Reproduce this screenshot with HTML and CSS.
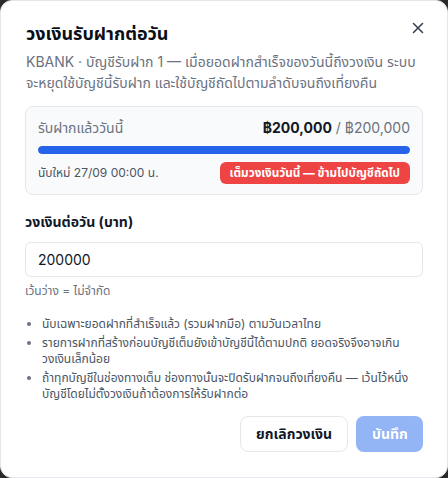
FILE: index.html
```html
<!DOCTYPE html>
<html lang="th">
<head>
<meta charset="utf-8">
<link rel="stylesheet" href="styles.css">
</head>
<body>
<div class="dialog">
  <div class="header">
    <h2 class="title">วงเงินรับฝากต่อวัน</h2>
    <button class="close" aria-label="close">
      <svg width="12" height="12" viewBox="0 0 12 12"><path d="M1.5 1.5L10.5 10.5M10.5 1.5L1.5 10.5" stroke="#374151" stroke-width="1.6" stroke-linecap="round"/></svg>
    </button>
  </div>
  <p class="desc">KBANK · บัญชีรับฝาก 1 — เมื่อยอดฝากสำเร็จของวันนี้ถึงวงเงิน ระบบจะหยุดใช้บัญชีนี้รับฝาก และใช้บัญชีถัดไปตามลำดับจนถึงเที่ยงคืน</p>
  <div class="card">
    <div class="row top">
      <span class="muted">รับฝากแล้ววันนี้</span>
      <span class="amount"><b>฿200,000</b> / ฿200,000</span>
    </div>
    <div class="bar"><div class="fill" style="width:100%"></div></div>
    <div class="row bottom">
      <span class="reset">นับใหม่ 27/09 00:00 น.</span>
      <span class="badge">เต็มวงเงินวันนี้ — ข้ามไปบัญชีถัดไป</span>
    </div>
  </div>
  <label class="label">วงเงินต่อวัน (บาท)</label>
  <div class="input">200000</div>
  <div class="hint">เว้นว่าง = ไม่จำกัด</div>
  <ul class="notes">
    <li><span class="t">นับเฉพาะยอดฝากที่สำเร็จแล้ว (รวมฝากมือ) ตามวันเวลาไทย</span></li>
    <li><span class="t">รายการฝากที่สร้างก่อนบัญชีเต็มยังเข้าบัญชีนี้ได้ตามปกติ ยอดจริงจึงอาจเกินวงเงินเล็กน้อย</span></li>
    <li><span class="t">ถ้าทุกบัญชีในช่องทางเต็ม ช่องทางนั้นจะปิดรับฝากจนถึงเที่ยงคืน — เว้นไว้หนึ่งบัญชีโดยไม่ตั้งวงเงินถ้าต้องการให้รับฝากต่อ</span></li>
  </ul>
  <div class="actions">
    <button class="btn secondary">ยกเลิกวงเงิน</button>
    <button class="btn primary">บันทึก</button>
  </div>
</div>
</body>
</html>
```
FILE: styles.css
```css
* { box-sizing: border-box; }
html, body { margin: 0; padding: 0; }
body {
  width: 448px;
  height: 478px;
  background: #2b2b2b;
  font-family: Inter, "Noto Sans Thai", "Noto Sans", sans-serif;
  color: #111827;
}
.dialog {
  width: 448px;
  height: 478px;
  background: #fff;
  border: 1px solid #e5e7eb;
  border-radius: 12px;
  padding: 16px 24px 16px 24px;
  display: flex;
  flex-direction: column;
  overflow: hidden;
}
.dialog > * { flex-shrink: 0; }
.header {
  display: flex;
  justify-content: space-between;
  align-items: flex-start;
}
.title {
  margin: 4px 0 0 1px;
  font-size: 18px;
  font-weight: 700;
  line-height: 26px;
  height: 26px;
  color: #0b0f19;
}
.close {
  border: 0;
  background: none;
  padding: 0;
  margin: 3px -3px 0 0;
  width: 16px;
  height: 16px;
  display: flex;
  align-items: center;
  justify-content: center;
}
.desc {
  margin: 4px 0 0 1px;
  font-size: 14px;
  line-height: 21px;
  color: #6b7280;
}
.card {
  margin-top: 13px;
  background: #f9fafb;
  border: 1px solid #e5e7eb;
  border-radius: 8px;
  padding: 10px 12px 10px 12px;
}
.row {
  display: flex;
  justify-content: space-between;
  align-items: center;
}
.row.top { height: 22px; }
.row.bottom { height: 22px; }
.muted { font-size: 14px; color: #6b7280; line-height: 22px; }
.amount { font-size: 14px; color: #6b7280; line-height: 22px; }
.amount b { color: #111827; font-weight: 700; }
.bar {
  margin: 7px 0 8px 0;
  height: 8px;
  background: #e5e7eb;
  border-radius: 4px;
  overflow: hidden;
}
.fill { height: 100%; background: #2563eb; border-radius: 4px; }
.reset { font-size: 12px; color: #4b5563; line-height: 18px; }
.badge {
  background: #ef4444;
  color: #fff;
  font-size: 11.7px;
  font-weight: 700;
  padding: 0 10px;
  height: 22px;
  line-height: 22px;
  border-radius: 6px;
}
.label {
  display: block;
  margin-top: 16px;
  font-size: 14px;
  font-weight: 700;
  line-height: 22px;
  height: 22px;
}
.input {
  margin-top: 9px;
  height: 35px;
  border: 1px solid #e5e7eb;
  border-radius: 6px;
  padding: 0 12px;
  font-size: 14px;
  display: flex;
  align-items: center;
  color: #111827;
}
.hint {
  margin-top: 5px;
  font-size: 12px;
  color: #6b7280;
  line-height: 18px;
  height: 18px;
}
.notes {
  margin: 16px 0 0 0;
  padding-left: 17px;
  font-size: 12px;
  line-height: 16px;
  color: #4b5563;
}
.notes .t { line-height: 8px; }
.notes li + li { margin-top: 3px; }
.notes li::marker { color: #6b7280; }
.actions {
  margin-top: 14px;
  display: flex;
  justify-content: flex-end;
  gap: 8px;
}
.btn {
  height: 36px;
  border-radius: 8px;
  font-family: inherit;
  font-size: 14px;
  font-weight: 700;
  padding: 0 16px;
}
.secondary {
  background: #fff;
  border: 1px solid #e5e7eb;
  color: #111827;
  padding: 0 15px;
}
.primary {
  background: #93b4f5;
  border: 0;
  color: #fff;
  width: 67px;
}
```
